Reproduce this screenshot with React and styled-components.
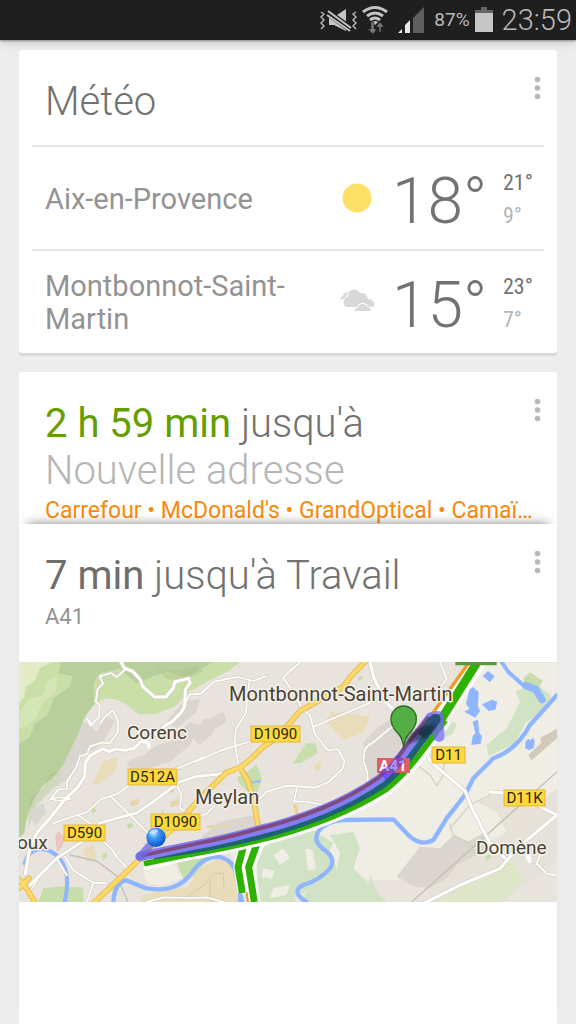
import React from "react";
import styled, { createGlobalStyle } from "styled-components";

const GlobalStyle = createGlobalStyle`
  * { box-sizing: border-box; }
  body { margin: 0; background: #ededed; font-family: Roboto, "Liberation Sans", sans-serif; color: #727272; }
  h1, h2, p, ul { margin: 0; padding: 0; font-weight: 300; }
`;

const Screen = styled.div`
  min-height: 100vh;
  display: flex;
  flex-direction: column;
`;

const StatusBar = styled.header`
  height: 40px;
  flex: none;
  display: flex;
  align-items: center;
  justify-content: flex-end;
  padding-right: 4px;
  background: #1f1f1f;
  color: #b9b9b9;
  box-shadow: 0 1px 2px #8a8a8a, 0 2px 10px #c4c4c4;
`;

const StatusIcons = styled.svg`
  width: 110px;
  height: 40px;
  margin-right: 6px;
`;

const BatteryLevel = styled.span`
  font-size: 19px;
  line-height: 40px;
`;

const Battery = styled.svg`
  width: 18px;
  height: 28px;
  margin: 0 9px 0 5px;
`;

const Clock = styled.time`
  font-size: 29px;
  font-weight: 300;
  line-height: 40px;
`;

const Feed = styled.main`
  flex: 1;
  display: flex;
  flex-direction: column;
  padding: 10px 19px 0;
`;

const Card = styled.section`
  background: #fff;
  border-radius: 3px;
`;

const WeatherCard = styled(Card)`
  padding: 0 13px;
  margin-bottom: 19px;
  box-shadow: 0 3px 1px #dadada;
`;

const CoveredCard = styled(Card)`
  height: 152px;
  overflow: hidden;
  padding: 26px 13px 0 26px;
  border-radius: 3px 3px 0 0;
`;

const TopCard = styled(Card)`
  flex: 1;
  position: relative;
  z-index: 1;
  border-radius: 0;
  box-shadow: 0 -9px 10px -9px rgba(0, 0, 0, 0.5);
`;

const CardTop = styled.div`
  display: flex;
  justify-content: space-between;
  align-items: flex-start;
  padding: ${(p) => p.$pad || "0"};
`;

const Title = styled.h2`
  padding-top: 2px;
  font-size: 40px;
  line-height: 47px;
  font-weight: 300;
  white-space: nowrap;
`;

const Duration = styled.span`
  font-weight: 400;
  color: ${(p) => p.$color};
`;

const Destination = styled.span`
  color: #b5b5b5;
`;

const MenuButton = styled.button`
  border: 0;
  background: none;
  padding: 0;
  width: 13px;
  height: 24px;
  color: #b9b9b9;
  svg { display: block; }
`;

const WeatherRow = styled.li`
  height: 104px;
  display: flex;
  align-items: center;
  padding: 2px 0 0 13px;
  border-top: 2px solid #e4e4e4;
`;

const RowList = styled.ul`
  list-style: none;
`;

const City = styled.span`
  flex: 1;
  font-size: 29px;
  line-height: 33px;
  font-weight: 400;
  color: #939393;
`;

const WeatherIcon = styled.svg`
  width: 36px;
  height: 32px;
  margin: 0 17px 0 13px;
`;

const Temperature = styled.span`
  width: 111px;
  padding-top: 5px;
  font-size: 64px;
  line-height: 76px;
  font-weight: 300;
`;

const Range = styled.span`
  width: 41px;
  display: flex;
  flex-direction: column;
  font-family: "Roboto Condensed", Roboto, sans-serif;
  font-size: 22px;
  line-height: 33px;
`;

const High = styled.span`
  font-weight: 400;
`;

const Low = styled.span`
  font-weight: 400;
  color: #b5b5b5;
`;

const Places = styled.p`
  font-size: 23px;
  line-height: 34px;
  font-weight: 400;
  color: #f98a0d;
  white-space: nowrap;
`;

const Via = styled.p`
  font-size: 22px;
  line-height: 32px;
  font-weight: 400;
  color: #939393;
  padding: 2px 26px 29px;
`;

const Map = styled.svg`
  display: block;
  width: 100%;
  height: auto;
`;

const Place = styled.text`
  font-family: Roboto, sans-serif;
  font-size: ${(p) => (p.$large ? 20 : 19)}px;
  fill: #4a4334;
  stroke: #f3f0ea;
  stroke-width: 3px;
  stroke-linejoin: round;
  paint-order: stroke;
`;

const ShieldText = styled.text`
  font-family: Roboto, sans-serif;
  font-size: 15px;
  font-weight: ${(p) => (p.$bold ? 700 : 400)};
  fill: ${(p) => (p.$bold ? "#fff" : "#2b2616")};
  text-anchor: middle;
`;

function Menu() {
  return (
    <MenuButton aria-label="Options">
      <svg width="13" height="24" fill="currentColor" aria-hidden="true">
        <circle cx="6.5" cy="3.5" r="2.8" />
        <circle cx="6.5" cy="12" r="2.8" />
        <circle cx="6.5" cy="20.5" r="2.8" />
      </svg>
    </MenuButton>
  );
}

function Sun() {
  return (
    <WeatherIcon viewBox="0 0 36 32" role="img" aria-label="Ensoleillé">
      <circle cx="18" cy="15" r="14.5" fill="#ffe066" />
    </WeatherIcon>
  );
}

function Clouds() {
  return (
    <WeatherIcon viewBox="0 0 36 32" role="img" aria-label="Nuageux">
      <g fill="#d8d8d8">
        <path d="M2 14q-1-4 2-5 1-4 5-4-2 2-2 5-3 1-5 4z" />
        <path d="M8 20a4.500 4.500 0 0 1-3.500-4.500q0-4.500 4-5.500 0-7 6.500-7.500 4 0 6 3.500 7-1 8 6 6 .5 6.500 5.500 0 2.500-3 2.500z" />
        <path d="M15 24.500q0-4 3.500-4 1-4 5-4 3.500 0 4.500 2.500 4 0 4.500 5.500z" stroke="#fff" strokeWidth="1.200" />
      </g>
      <path d="M13 24h22v2H13z" fill="#fff" />
    </WeatherIcon>
  );
}

const roads = [
  { w: 9, d: "M333 21l10 18 26 11 22 24 7 20 36 32 34-1 22-26 4-18 42-11 4 14-14 20-2 50-10 18-28 28-22 12-22 24-34 10-36 34-26 6-30-4-18 8-20-8-38 20-14 22-2 40-20 32-40 38-46 58-36 40-22 44-14 80" },
  { w: 5, d: "M345 44l-24 22-18-12-34 10 10 22-16 16-6 38 12 10-2 36-26 26-10-22 18 20M270 206l16-22 22-18 16 30 0 36-26 34-20-4-38 12-8 22-22 8-12 34-26 40-2 24-26 2-22 28 26 6 34-6" },
  { w: 5, d: "M118 435l20-8 40 2M130 505l70-24 32-10 40-38 50-16 50-36 80-28 54-14 74-32" },
  { w: 8, d: "M50 700l40-40 50-50 70-46 60-60 50-14 60-16 50-34 80-60 50-16 60-6 80-12" },
  { w: 5, d: "M302 424l50 48 70 70M205 482l40 26 14 32 44 40 20 30 30 30M496 380l18 40-4 40 24 14M520 150l20-32 32-2 40-36 70-14 50 12 36-14M718 78l-6 50-4 44-30 50-4 40 10 60M555 320l80-34 70-22 80-20" },
  { w: 5, d: "M730 450l40-40 60-18 84 6 44-18 40-40 6-20-20-38-30 4-40-50-14-56-20-14-40-68-20-30 20-20 30-25M910 215l170-72M860 400l-8 40 38 0 50 10 20 22M1080 265l-16 20-4 30 12 40 2 40M560 485l30-8 24-26" },
  { w: 5, d: "M165 605l24 40 60 38 40 2M250 685l-20 56M410 741l50-14 90 2 40-2 50 14M90 660l-30 50M140 610l30 50" },
  { w: 9, d: "M1080 21l12 48 34 70 60 60 50 60 24 60 60 50 46 40 20 50 30 60 28 54 40 36M1440 410l100 10 60 40 41 20M1641 480l-120 100-50 60-120 50-140 70" },
  { w: 5, d: "M1290 21l20 50-30 40-40 20M1590 600l-10 26 30 30 31 6M1080 270l60-50 40-20" },
];

const river = [
  "M44 625Q56 582 98 582 152 592 168 650 176 690 164 741",
  "M310 741Q314 682 348 676 380 690 410 700 500 716 544 655 580 600 630 606 670 615 680 660L696 741",
  "M890 741Q840 710 880 690 930 675 960 640 978 615 950 590 905 560 925 530 945 498 1000 495L1150 493 1200 545Q1235 575 1270 555L1310 490 1365 420 1390 370 1450 310Q1520 285 1560 210L1641 120",
];

const highway = "M245 750L390 612 500 510 570 430 650 352 690 338 730 305 760 275 800 250 870 168 1000 95 1024 62 1070 15M690 338l24 40 18 62 12 70M27 672l24 30 24 40M27 700l30-30";

const lane = {
  brown: "M395 602L540 570Q650 549 740 523 838 500 938 459 1028 422 1106 368 1154 326 1192 268L1256 186",
  lavender: "M390 604L540 573Q650 552 740 527 839 504 940 463 1030 426 1109 372 1158 330 1198 271L1262 186",
  teal: "M430 603L540 586Q650 568 742 545 843 521 945 480 1038 442 1120 389 1174 345 1222 276L1288 188",
  green: "M402 626L540 598Q650 580 745 556 848 532 950 492 1046 455 1130 402 1185 358 1240 284L1306 196",
  edge: "M402 638L540 608Q650 590 748 566 852 542 955 502 1052 465 1138 411 1194 366 1252 290L1318 200",
};

const shields = [
  { x: 232, y: 64, w: 49, t: "D1090" },
  { x: 109, y: 107, w: 49, t: "D512A" },
  { x: 132, y: 152, w: 49, t: "D1090" },
  { x: 45, y: 163, w: 41, t: "D590" },
  { x: 413, y: 85, w: 33, t: "D11" },
  { x: 485, y: 128, w: 41, t: "D11K" },
];

function RouteMap() {
  return (
    <Map viewBox="0 0 538 240" role="img" aria-label="Itinéraire vers Travail">
      <defs>
        <radialGradient id="ball" cx="0.38" cy="0.3" r="0.7">
          <stop offset="0" stopColor="#b9e0ff" />
          <stop offset="0.4" stopColor="#3e97f5" />
          <stop offset="1" stopColor="#0b54c8" />
        </radialGradient>
        <radialGradient id="shade">
          <stop offset="0" stopColor="#101818" stopOpacity="0.6" />
          <stop offset="0.6" stopColor="#101818" stopOpacity="0.4" />
          <stop offset="1" stopColor="#101818" stopOpacity="0" />
        </radialGradient>
      </defs>
      <svg width="538" height="240" viewBox="27 21 1614 720" fill="none" strokeLinejoin="round" strokeLinecap="round">
        <path fill="#e8e4dd" d="M27 21H1641V741H27z" />
        {/* hillsides */}
        <path fill="#cadfa8" d="M27 21H690l-34 26-66 34-50 28-46 46-60 23h-50q-50-50-94-48-42 12-70 60l-30 80q-40 80-90 120-46 50-56 130l-8 26H27z" />
        <path fill="#b8ce9b" d="M152 21l-6 34 40 8-4 30-50 36-20 50-38 28-14 40-33 20V545l16-10q10-90 60-146 60-46 90-120l30-80 30-44-2-60 18-30 60-14 50 44 90-36 60 20 50-30 65-40z" />
        <path fill="#e2ebc5" d="M27 21h100l-38 18-14 38-28 20-4 30-16 18z" />
        <path fill="#d6e5b5" d="M27 170l34-40 40-10 10-40 32-20-6 50-40 34-22 50-48 30z" />
        <path fill="#a9c38d" opacity=".4" d="M60 430l40-30 20-40 40-20-20 50-60 60-26 70zM440 40l60 10 60-20 20 20-60 26-50-4z" />
        {/* relief */}
        <g fill="#dad6cf">
          <path d="M222 200l40 30 24-44 30 10-40 70-60 40-30 60-50 30 30-80zM350 320l50-20 40-30 40-10 60-60 30 10-30 60-60 50-80 26-40-2zM470 200l50-60 50-10-10 40-60 50zM60 470l40-26 8 30-34 40zM545 240l40-50 40 10-20 40-40 30zM600 190l40-20 10 30-30 20z" />
          <path d="M570 550l60-50 100-20 20 40-150 32zM1060 260l40-40 60-40 60 20-90 140-60 50zM1160 660l60-80 120-50 30-80 60-20 60 90-110 60-70 70-60 30zM1540 320l101-100v90l-60 25zM1600 450l41-40v60z" />
        </g>
        <path fill="#efede4" d="M400 632l300-68 160-40 180-70 110-70 90-110 180-250h221v400l-120 90-180 100-160 60H690l-24-70-60-62-60 40-60 40-80-10z" />
        <path fill="#e6e2da" d="M1400 440l60 30 30 60-180 110-60 80h250l141-100V400l-70 60-60-10-50-40z" />
        <path fill="#dad6cf" d="M1160 665l70-90 60 5 40-40 40 20 60-30-10 60-80 40-30 40-50 30-50-6z" />
        {/* woods and parks */}
        <g fill="#d2e3c5">
          <path d="M740 590l50-30 80-20 40-16 60 40-10 20 20 60-50 50-80 30 10 17H745z" />
          <path d="M960 540l70-10 20 50-20 60 60 60 40 41H870l30-42 80-56 10-50zM1080 660l30 81h-30z" />
          <path d="M1430 270l60-50 40-80-14-30 60-26 50 40-20 40-60 40-30 60-80 40z" />
          <path d="M1280 741l160-100 60-30 40 60-60 70z" fill="#dde7c7" />
          <path d="M1305 220l20-22 16 10-14 30-20 8z" />
        </g>
        <path fill="#c7ddab" d="M680 370l60-40 16 40-20 60-44-40zM848 325l40-60 30 0 4 30-50 30zM100 700l60-6 60 4v43H85zM1540 70l20-18 38 26-10 18-44-6zM500 622l60-16 32 8-40 50-30 10z" />
        <path fill="#efede4" d="M790 600l30-20 20 30-30 20zM886 580l22 6 10 56-24 4zM760 640l34 8-10 24-30-6zM790 700l50-10-10 30-50 10zM400 640l90-20 26 50-60 22-46-8z" />
        <path fill="#e8dcba" d="M246 390l30-70 50-16-14 50-50 36zM960 170l120 14-20 50-60 20-50-50zM530 700l40-60 50-28 36 10 20 40 12 79H500zM912 330l22-12-4 28-14 2zM220 580l30-10 10 40-30 10zM400 720l80-20 60 0 0 41H390z" />
        <path stroke="#d3c9ac" strokeWidth="3" d="M520 732l60-40 34-36 26-2 2 50M600 741v-60" />
        <path fill="#e6d6b0" d="M360 440l24-10 4 16-24 10zM480 442l24-12 4 20-24 8zM590 512l26-4v12h-24zM630 510l26-6v14h-24z" />
        <path fill="#eac5c2" d="M135 545l10-16 20 20-10 28-14 14z" />
        <path fill="#c6dda7" d="M350 510l14-8 6 12-14 8zM276 602l12-10 4 14-12 8zM480 406l10-4 2 8-10 4zM242 462l12-4 4 12-12 4zM1425 605l14-8 6 10-14 10zM1042 70l12-8 6 8-14 8zM450 470l10-4 2 10z" />
        <path fill="#d3c9bb" d="M1555 300l86-80v30l-76 66zM1590 250l50-28v12l-44 36z" />
        {/* rail and minor paths */}
        <g stroke="#c4bfb5" strokeWidth="4">
          <path d="M1205 741L1430 540l211-190" />
          <path d="M180 600l80 18 60 44 34 79" />
        </g>
        <path stroke="#d6d1c0" strokeWidth="4" d="M1210 320l50 40 20 32 20-30 4-60M1320 510l10 30 40 20 30 40M1320 520l60-70 60-30" />
        {/* water */}
        <g stroke="#8fb5ff">
          <path strokeWidth="12" d={river[0]} />
          <path strokeWidth="13" d={river[1]} />
          <path strokeWidth="13" d={river[2]} />
          <path strokeWidth="12" d="M1475 21l20 30 50 44" />
          <path strokeWidth="22" d="M1548 92l30 12 18 30" />
        </g>
        <g fill="#8fb5ff">
          <path d="M1418 64l16-16 20 16-14 18zM1378 104l12-8 16 16-2 40-8 30-16-20-12-14zM1362 170l40-20 8 18-14 20zM1416 148l30-14 16 6-6 24-20 4zM1388 200l16-6 4 40 8 10-4 22-28 4 4-26 8-10zM1546 262l8-10 8 4 6-8 6 10-2 20-14 8-12-6z" />
          <path d="M724 380l28-6v8l-28 4z" opacity=".8" />
        </g>
        {/* roads */}
        {roads.map((r) => (
          <path key={r.d} d={r.d} stroke="#d5cfc4" strokeWidth={r.w + 4} />
        ))}
        {roads.map((r) => (
          <path key={r.d} d={r.d} stroke="#fff" strokeWidth={r.w} />
        ))}
        <path d="M404 250l-10 14 18 2v14l8 0V262zM1545 600l10 24 10-2-4-26z" fill="#fff" />
        <path stroke="#e3b74a" strokeWidth="17" d={highway} />
        <path stroke="#fbd968" strokeWidth="12" d={highway} />
        <path stroke="#f1ce87" strokeWidth="9" d="M855 452l8 30M735 515l30-6" />
        {/* traffic and the highlighted route */}
        <g strokeLinecap="butt">
          <path stroke="#fff" strokeWidth="36" d="M708 565l-20 70 14 82M748 560l-32 76 18 105" />
          <path stroke="#8fb5ff" strokeWidth="11" d="M690 712v30" />
          <path stroke="#e59a2c" strokeWidth="6" d="M710 712l4 30" />
          <path stroke="#2fb100" strokeWidth="21" d="M702 568l-18 68 13 78M742 562l-26 74 17 105" />
          <path stroke="#fff" strokeWidth="52" d="M1262 226L1394 35l12-20" />
          <path stroke="#f29a26" strokeWidth="10" d="M1250 200L1378 21" />
          <path stroke="#2fb100" strokeWidth="26" d="M1278 218L1402 21" />
          <path stroke="#fff" strokeWidth="14" d={lane.edge} />
          <path stroke="#2fb100" strokeWidth="17" d={lane.green} />
          <path stroke="#1c6275" strokeWidth="20" d={lane.teal} />
          <path stroke="#1c6275" strokeWidth="28" strokeLinecap="round" d="M1212 282L1278 196" />
          <path stroke="#857cf2" strokeWidth="28" strokeLinecap="round" d={lane.lavender} />
          <path stroke="#7e4a80" strokeWidth="11" d={lane.brown} />
        </g>
        <path fill="#599a3e" d="M1336 21h124v10h-124z" />
      </svg>

      {shields.map((s) => (
        <g key={s.t + s.x}>
          <rect x={s.x} y={s.y} width={s.w} height="16" fill="#fed93c" stroke="#e3b73e" />
          <ShieldText x={s.x + s.w / 2} y={s.y + 13}>{s.t}</ShieldText>
        </g>
      ))}
      <rect x="358" y="96" width="33" height="15" fill="#dc5f63" />
      <ShieldText $bold x="374" y="109">A41</ShieldText>
      <Place x="108" y="77">Corenc</Place>
      <Place $large x="210" y="39">Montbonnot-Saint-Martin</Place>
      <Place $large x="176" y="142">Meylan</Place>
      <Place x="-2" y="187">oux</Place>
      <Place x="457" y="192">Domène</Place>

      <svg width="538" height="240" viewBox="27 21 1614 720" fill="none" strokeLinejoin="round">
        <path stroke="#6f67e8" strokeWidth="24" strokeLinecap="round" opacity=".75" d="M390 606L436 552" />
        <path stroke="#4a30f8" strokeWidth="30" opacity=".5" d="M1118 363Q1150 342 1174 309" />
        <path fill="#7468fa" opacity=".75" d="M1262 190q4-24 24-22 14 2 14 18l4 58q-2 18-20 16-14-2-16-20z" />
        <path fill="#1c4c66" opacity=".85" d="M1252 194q14-22 34-16 10 10 2 26l-40 50-24-20z" />
        <ellipse cx="1230" cy="236" rx="62" ry="22" transform="rotate(-27 1230 236)" fill="url(#shade)" />
        <path fill="#55ad45" stroke="#2c6c24" strokeWidth="4" d="M1181 280q-2-30-18-46-20-20-20-43a38 38 0 0 1 76 0q0 23-20 43-16 16-18 46z" />
        <circle cx="438" cy="547" r="29" fill="url(#ball)" />
        <path fill="#fff" opacity=".5" d="M416 537q8-16 24-14 10 6-4 12z" />
      </svg>
    </Map>
  );
}

function Status() {
  return (
    <StatusBar>
      <StatusIcons viewBox="318 0 110 40" fill="none" aria-hidden="true">
        <path d="M329 17h5l12-8v22l-12-6h-5z" fill="#c4c4c4" />
        <path d="M327 12l25 18" stroke="#1f1f1f" strokeWidth="7" />
        <path d="M328 11l23 17M327 15l23 16" stroke="#c4c4c4" strokeWidth="2" />
        <path d="M321 12l3 2-3 3 3 3-3 3 3 3-3 3M356 12l-3 2 3 3-3 3 3 3-3 3 3 3" stroke="#b9b9b9" strokeWidth="1.4" />
        <path d="M363 12q12-9 24 0M367 16q8-6 16 0M370 20q5-4 10 0" stroke="#c4c4c4" strokeWidth="3" />
        <path d="M372 22q3-2 6 0l-3 3z" fill="#c4c4c4" />
        <path d="M371 22h3v7h3l-4 5-5-5h3zM379 32v-5h-3l4-5 4 5h-3v5z" fill="#777" stroke="#1f1f1f" strokeWidth=".5" />
        <path d="M398 33l4-4v4zM405 25l5-5v13h-5z" fill="#e8e8e8" />
        <path d="M413 18L424 7v26h-11z" fill="#5e5e5e" />
      </StatusIcons>
      <BatteryLevel>87%</BatteryLevel>
      <Battery viewBox="0 0 18 28" aria-hidden="true">
        <path d="M0 4h6V1h6v3h6v4H0z" fill="#666" />
        <path d="M0 7h18v19H0z" fill="#c6c6c6" />
      </Battery>
      <Clock>23:59</Clock>
    </StatusBar>
  );
}

export default function App() {
  return (
    <Screen>
      <GlobalStyle />
      <Status />
      <Feed>
        <WeatherCard>
          <CardTop $pad="26px 0 20px 13px">
            <Title as="h1">Météo</Title>
            <Menu />
          </CardTop>
          <RowList>
            <WeatherRow>
              <City>Aix-en-Provence</City>
              <Sun />
              <Temperature>18°</Temperature>
              <Range><High>21°</High><Low>9°</Low></Range>
            </WeatherRow>
            <WeatherRow>
              <City>Montbonnot-Saint-Martin</City>
              <Clouds />
              <Temperature>15°</Temperature>
              <Range><High>23°</High><Low>7°</Low></Range>
            </WeatherRow>
          </RowList>
        </WeatherCard>

        <CoveredCard>
          <CardTop>
            <Title>
              <Duration $color="#669d00">2 h 59 min</Duration> jusqu'à
              <br />
              <Destination>Nouvelle adresse</Destination>
            </Title>
            <Menu />
          </CardTop>
          <Places>Carrefour • McDonald's • GrandOptical • Camaï…</Places>
        </CoveredCard>

        <TopCard>
          <CardTop $pad="26px 13px 0 26px">
            <Title>
              <Duration $color="#6e6e6e">7 min</Duration> jusqu'à Travail
            </Title>
            <Menu />
          </CardTop>
          <Via>A41</Via>
          <RouteMap />
        </TopCard>
      </Feed>
    </Screen>
  );
}
